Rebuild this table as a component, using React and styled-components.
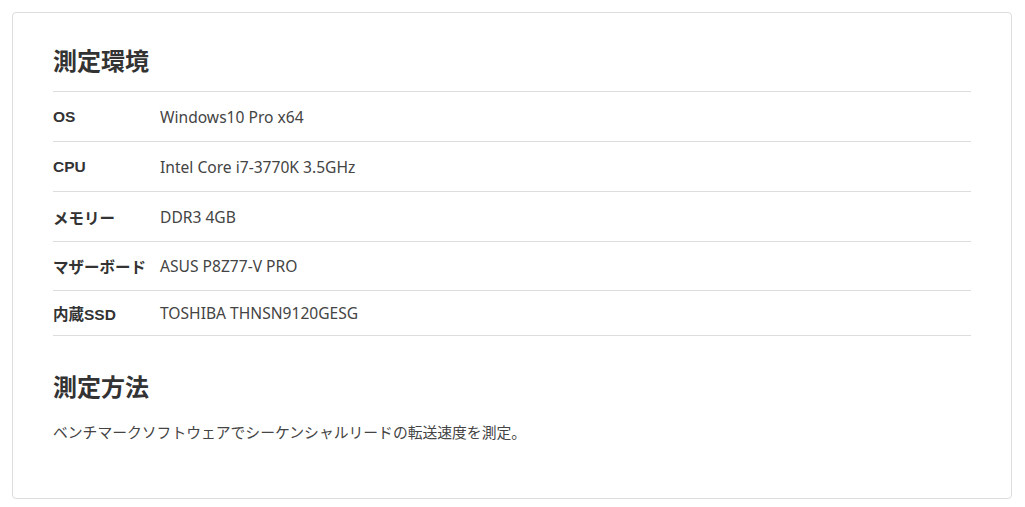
import React from 'react';
import styled, { createGlobalStyle } from 'styled-components';

const GlobalStyle = createGlobalStyle`
  html, body {
    margin: 0;
    padding: 0;
    background: #fff;
  }
  body {
    font-family: 'Noto Sans', 'Noto Sans CJK JP', sans-serif;
    color: #333;
  }
`;

const Page = styled.div`
  padding: 12px 13px 9px 12px;
`;

const Card = styled.section`
  border: 1px solid #ddd;
  border-radius: 4px;
  padding: 29px 40px 53px;
`;

const Title = styled.h2`
  margin: ${({ $top }) => $top || 0}px 0 0;
  font-family: 'Noto Sans CJK JP', sans-serif;
  font-size: 24px;
  font-weight: 700;
  line-height: 36px;
  color: #333;
`;

const Table = styled.div`
  margin-top: 13px;
  border-top: 1px solid #ddd;
`;

const Row = styled.div`
  display: grid;
  grid-template-columns: 107px 1fr;
  align-items: center;
  height: ${({ $h }) => $h || 49}px;
  border-bottom: 1px solid #ddd;
`;

const Label = styled.div`
  font-family: 'Liberation Sans', 'Noto Sans CJK JP', sans-serif;
  font-size: 15.5px;
  font-weight: 700;
  color: #333;
`;

const Value = styled.div`
  font-family: 'Noto Sans', 'Noto Sans CJK JP', sans-serif;
  font-size: 15.6px;
  color: #444;
`;

const Text = styled.p`
  margin: 15px 0 0;
  font-family: 'Noto Sans CJK JP', sans-serif;
  font-size: 14.8px;
  line-height: 26px;
  color: #444;
`;

const specs = [
  { label: 'OS', value: 'Windows10 Pro x64' },
  { label: 'CPU', value: 'Intel Core i7-3770K 3.5GHz' },
  { label: 'メモリー', value: 'DDR3 4GB' },
  { label: 'マザーボード', value: 'ASUS P8Z77-V PRO', h: 48 },
  { label: '内蔵SSD', value: 'TOSHIBA THNSN9120GESG', h: 44 },
];

const App = () => (
  <>
    <GlobalStyle />
    <Page>
      <Card>
        <Title>測定環境</Title>
        <Table>
          {specs.map(({ label, value, h }) => (
            <Row key={label} $h={h}>
              <Label>{label}</Label>
              <Value>{value}</Value>
            </Row>
          ))}
        </Table>
        <Title $top={32}>測定方法</Title>
        <Text>ベンチマークソフトウェアでシーケンシャルリードの転送速度を測定。</Text>
      </Card>
    </Page>
  </>
);

export default App;
